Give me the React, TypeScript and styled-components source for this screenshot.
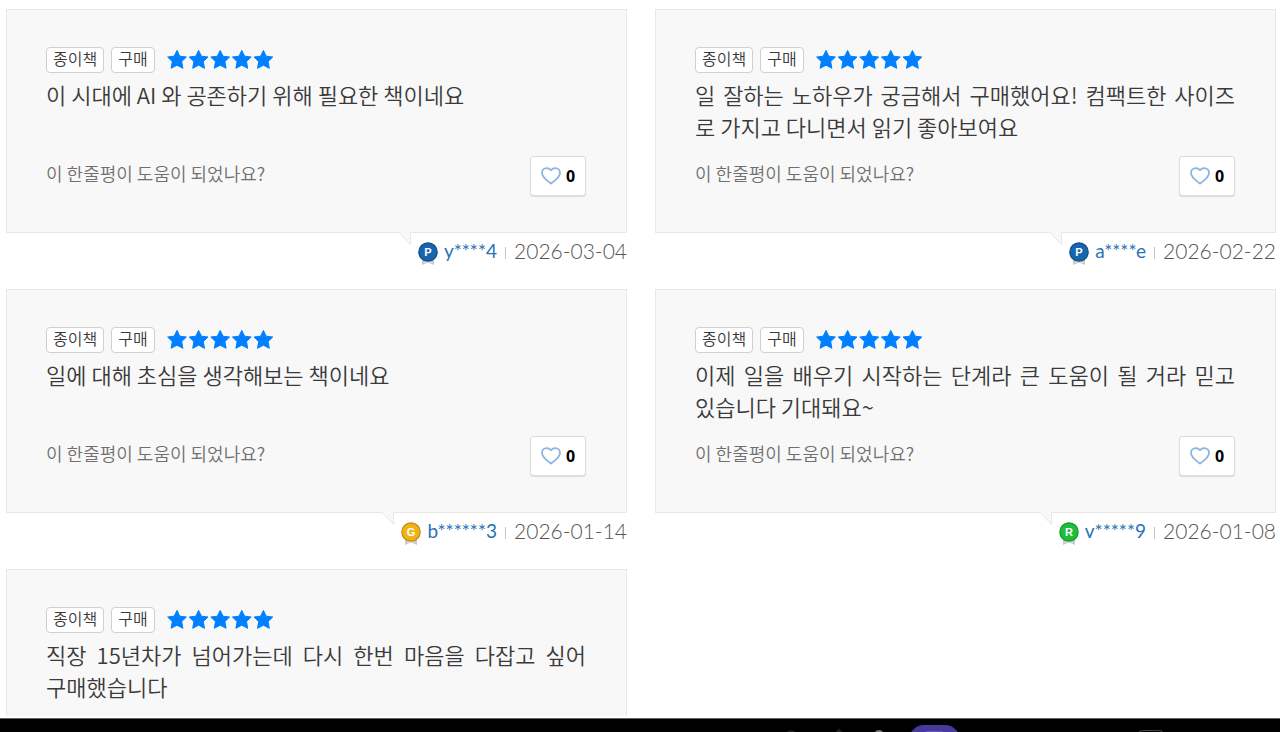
import React from "react";
import styled, { createGlobalStyle } from "styled-components";

const GlobalStyle = createGlobalStyle`
  *, *::before, *::after { box-sizing: border-box; }
  body {
    margin: 0;
    background: #fff;
    color: #3a3a3a;
    font-family: "Noto Sans CJK KR", "Noto Sans", sans-serif;
  }
`;

const Screen = styled.div`
  display: flex;
  flex-direction: column;
  height: 100vh;
  overflow: hidden;
`;

const ReviewGrid = styled.main`
  flex: 1;
  min-height: 0;
  overflow: hidden;
  display: grid;
  grid-template-columns: 1fr 1fr;
  align-content: start;
  column-gap: 28px;
  padding: 9px 4px 0 6px;
`;

const Review = styled.article`
  display: flex;
  flex-direction: column;
  min-width: 0;
`;

const Card = styled.div`
  padding: 37px 40px 36px 39px;
  border: 1px solid #e8e8e8;
  background: #f8f8f8;
`;

const TagRow = styled.div`
  display: flex;
  align-items: center;
  height: 26px;
  gap: 7px;
`;

const Tag = styled.span`
  height: 26px;
  padding: 0 6px;
  border: 1px solid #d0d0d0;
  border-radius: 4px;
  background: #fff;
  font-size: 16px;
  font-weight: 350;
  line-height: 20px;
`;

const Stars = styled.svg`
  display: block;
  margin-left: 5px;
`;

const Body = styled.p`
  min-height: 64px;
  margin: 5px 0 14px;
  font-size: 22px;
  font-weight: 350;
  line-height: 32px;
`;

const Line = styled.span<{ $fill: boolean }>`
  display: block;
  text-align: justify;
  text-align-last: ${(p) => (p.$fill ? "justify" : "left")};
`;

const CardFoot = styled.div`
  display: flex;
  justify-content: space-between;
  height: 40px;
`;

const Question = styled.span`
  color: #707070;
  font-size: 18px;
  font-weight: 350;
  line-height: 34px;
`;

const LikeButton = styled.button`
  display: flex;
  align-items: center;
  justify-content: center;
  gap: 5px;
  width: 56px;
  height: 40px;
  padding: 0;
  border: 1px solid #dcdcdc;
  border-radius: 3px;
  background: #fff;
  box-shadow: 0 1px 1px #dcdcdc;
  color: #000;
  font: 700 16px "Noto Sans", sans-serif;
`;

const Meta = styled.footer`
  display: flex;
  justify-content: flex-end;
  align-items: flex-start;
  height: 56px;
  line-height: 36px;
`;

const Tail = styled.svg`
  display: block;
  margin: -1px 7px 0 0;
`;

const Medal = styled.svg`
  display: block;
  margin: 9px 6px 0 0;
`;

const UserLink = styled.a`
  color: #2a72b8;
  font-family: Lato, sans-serif;
  font-size: 19px;
  text-decoration: none;
`;

const Divider = styled.span`
  width: 1px;
  height: 12px;
  margin: 14px 8px 0;
  background: #c4c4c4;
`;

const DateText = styled.time`
  color: #555;
  font-family: Lato, sans-serif;
  font-size: 21px;
  font-weight: 300;
`;

const Dock = styled.div`
  display: flex;
  justify-content: flex-end;
  flex: none;
  height: 16px;
  padding: 7px 116px 0 0;
  border-top: 2px solid #fff;
  background: #000;
  background-clip: padding-box;
  box-shadow: inset 0 1px 0 #666;
  overflow: hidden;
`;

type Grade = "P" | "G" | "R";

const gradeColors: Record<Grade, [string, string]> = {
  P: ["#1766ad", "#124f88"],
  G: ["#efb413", "#bf8d18"],
  R: ["#20bd3c", "#169b30"],
};

const starPath =
  "M10 .8 12.8 6.6 19.4 7.4 14.7 12 15.9 18.7 10 15.6 4.1 18.7 5.3 12 .6 7.4 7.2 6.6Z";

function Rating() {
  return (
    <Stars width="108" height="22" viewBox="0 0 108 22" role="img" aria-label="5">
      {[0, 1, 2, 3, 4].map((n) => (
        <path
          key={n}
          d={starPath}
          transform={`translate(${n * 21.6} 0.6)`}
          fill="#0080ff"
          stroke="#0080ff"
          strokeWidth="1"
          strokeLinejoin="round"
        />
      ))}
    </Stars>
  );
}

function GradeMedal({ grade }: { grade: Grade }) {
  const [fill, edge] = gradeColors[grade];
  return (
    <Medal width="20" height="24" viewBox="0 0 20 24">
      <path d="M4 15v8l6-2.5 6 2.5v-8Z" fill="#c9c9c9" />
      <path d="M6.5 20.5 10 19l3.500 1.500" stroke="#eee" fill="none" />
      <circle cx="10" cy="10" r="9.200" fill={fill} stroke={edge} strokeWidth="1.200" />
      <text
        x="10"
        y="14"
        textAnchor="middle"
        fill="#fff"
        fontFamily="Liberation Sans, sans-serif"
        fontSize="11"
        fontWeight="700"
      >
        {grade}
      </text>
    </Medal>
  );
}

interface ReviewData {
  lines: string[];
  grade: Grade;
  user: string;
  date: string;
}

const reviews: ReviewData[] = [
  { lines: ["이 시대에 AI 와 공존하기 위해 필요한 책이네요"], grade: "P", user: "y****4", date: "2026-03-04" },
  {
    lines: ["일 잘하는 노하우가 궁금해서 구매했어요! 컴팩트한 사이즈", "로 가지고 다니면서 읽기 좋아보여요"],
    grade: "P",
    user: "a****e",
    date: "2026-02-22",
  },
  { lines: ["일에 대해 초심을 생각해보는 책이네요"], grade: "G", user: "b******3", date: "2026-01-14" },
  {
    lines: ["이제 일을 배우기 시작하는 단계라 큰 도움이 될 거라 믿고", "있습니다 기대돼요~"],
    grade: "R",
    user: "v*****9",
    date: "2026-01-08",
  },
];

const lastLines = ["직장 15년차가 넘어가는데 다시 한번 마음을 다잡고 싶어", "구매했습니다"];

function ReviewCard({ lines, children }: { lines: string[]; children?: React.ReactNode }) {
  return (
    <Card>
      <TagRow>
        <Tag>종이책</Tag>
        <Tag>구매</Tag>
        <Rating />
      </TagRow>
      <Body>
        {lines.map((line, i) => (
          <Line key={line} $fill={i < lines.length - 1}>
            {line}
          </Line>
        ))}
      </Body>
      {children}
    </Card>
  );
}

function Helpful() {
  return (
    <CardFoot>
      <Question>이 한줄평이 도움이 되었나요?</Question>
      <LikeButton type="button">
        <svg width="20" height="18" viewBox="0 0 20 18" fill="none">
          <path
            d="M10 16.600C7.500 14.500 1 10.500 1 5.900 1 3 3.200 1.200 5.500 1.200 7.500 1.200 9 1.800 10 3.200 11 1.800 12.500 1.200 14.500 1.200 16.800 1.200 19 3 19 5.900 19 10.500 12.500 14.500 10 16.600Z"
            stroke="#8db4e0"
            strokeWidth="1.800"
            strokeLinejoin="round"
          />
        </svg>
        0
      </LikeButton>
    </CardFoot>
  );
}

export default function App() {
  return (
    <>
      <GlobalStyle />
      <Screen>
        <ReviewGrid>
          {reviews.map((r) => (
            <Review key={r.user}>
              <ReviewCard lines={r.lines}>
                <Helpful />
              </ReviewCard>
              <Meta>
                <Tail width="12" height="14" viewBox="0 0 12 14">
                  <path d="M0 0 11.500 12.500V0Z" fill="#f8f8f8" />
                  <path d="M0 .5 11.500 12.500V.5" fill="none" stroke="#e8e8e8" />
                </Tail>
                <GradeMedal grade={r.grade} />
                <UserLink href="#">{r.user}</UserLink>
                <Divider />
                <DateText dateTime={r.date}>{r.date}</DateText>
              </Meta>
            </Review>
          ))}
          <Review>
            <ReviewCard lines={lastLines} />
          </Review>
        </ReviewGrid>
        <Dock>
          <svg width="379" height="20" viewBox="0 0 379 20" fill="none">
            <circle cx="6" cy="12" r="6" stroke="#333" />
            <path d="m50 9 4-4 4 4" stroke="#222" strokeWidth="2" />
            <circle cx="94" cy="10" r="4" stroke="#777" strokeWidth="2" />
            <rect x="124" y="0" width="51" height="30" rx="15" fill="#463b9c" />
            <path d="M141 6.500h17" stroke="#6256b5" />
            <rect x="353.500" y="5.500" width="25" height="20" rx="4" stroke="#444" />
          </svg>
        </Dock>
      </Screen>
    </>
  );
}
